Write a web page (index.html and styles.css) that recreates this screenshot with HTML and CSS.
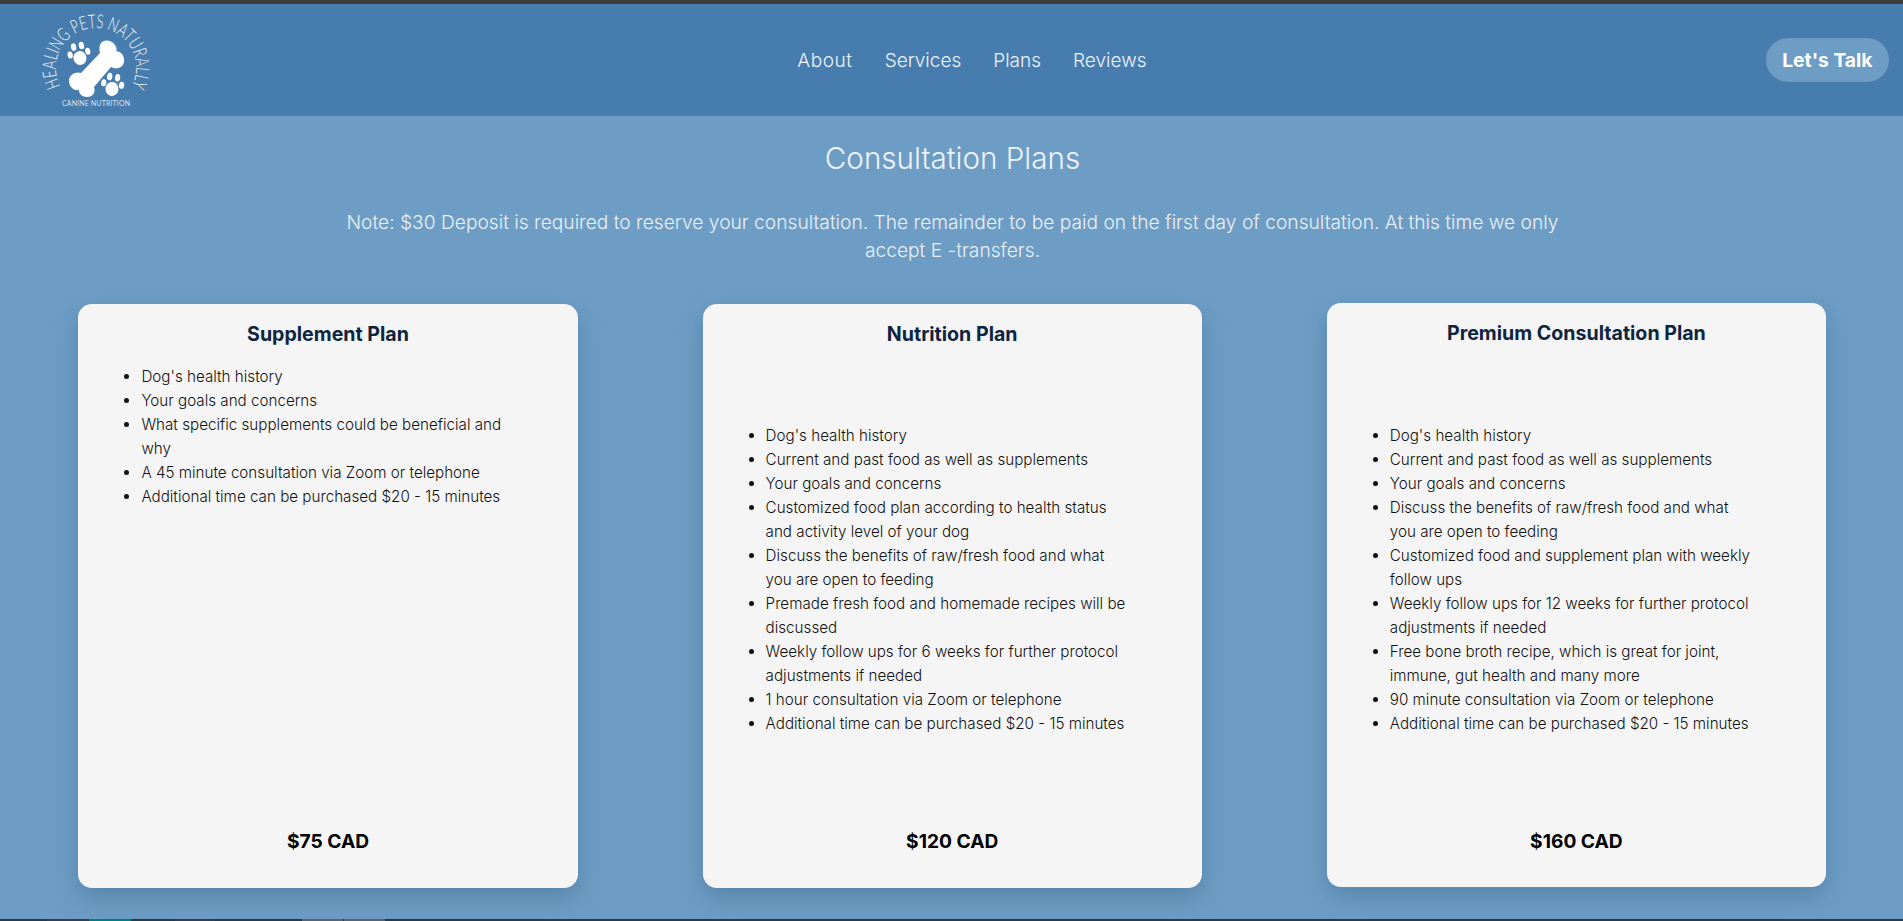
FILE: index.html
```html
<!DOCTYPE html>
<html lang="en">
<head>
<meta charset="utf-8">
<title>Healing Pets Naturally</title>
<link rel="stylesheet" href="styles.css">
</head>
<body>
<div class="top-edge"></div>
<header class="site-header">
  <a class="logo" href="#" aria-label="Healing Pets Naturally">
    <svg class="logo-svg" viewBox="30 4 148 112" width="148" height="112">
      <defs><path id="arc" d="M60.4 86.2 A40 40 0 1 1 131.6 86.2"/></defs>
      <text class="logo-arc"><textPath href="#arc" textLength="163" lengthAdjust="spacingAndGlyphs">HEALING PETS NATURALLY</textPath></text>
      <g class="logo-white">
        <path d="M101 43 C104 39 112 40 115 45 C117 48 117 50 116 51 C121 51 125 56 124 62 C123 68 116 70 111 67 L94 87 C96 92 93 97 87 97 C82 97 79 94 79 90 C74 91 69 87 69 81 C69 75 75 71 81 73 L100 53 C99 49 99 46 101 43 Z"/>
        <g transform="translate(80 58) rotate(-12)">
          <ellipse cx="0" cy="0" rx="6.5" ry="7"/>
          <ellipse cx="-9" cy="-5" rx="2.6" ry="3.5"/>
          <ellipse cx="-4" cy="-12" rx="2.6" ry="3.8"/>
          <ellipse cx="4" cy="-12" rx="2.6" ry="3.8"/>
          <ellipse cx="9" cy="-5" rx="2.6" ry="3.5"/>
        </g>
        <g transform="translate(112 89) rotate(8)">
          <ellipse cx="0" cy="0" rx="6.5" ry="7"/>
          <ellipse cx="-9" cy="-5" rx="2.6" ry="3.5"/>
          <ellipse cx="-4" cy="-12" rx="2.6" ry="3.8"/>
          <ellipse cx="4" cy="-12" rx="2.6" ry="3.8"/>
          <ellipse cx="9" cy="-5" rx="2.6" ry="3.5"/>
        </g>
      </g>
      <text class="logo-sub" x="96" y="106" text-anchor="middle" textLength="68">CANINE NUTRITION</text>
    </svg>
  </a>
  <nav class="main-nav">
    <a class="nav-about" href="#">About</a>
    <a href="#">Services</a>
    <a href="#">Plans</a>
    <a href="#">Reviews</a>
  </nav>
  <a class="cta" href="#">Let's Talk</a>
</header>
<main class="plans">
  <h1 class="plans-title">Consultation Plans</h1>
  <p class="plans-note">Note: $30 Deposit is required to reserve your consultation. The remainder to be paid on the first day of consultation. At this time we only accept E -transfers.</p>
  <section class="plan-grid">
    <article class="plan plan-top">
      <h2>Supplement Plan</h2>
      <div class="plan-body">
        <ul>
          <li>Dog's health history</li>
          <li>Your goals and concerns</li>
          <li>What specific supplements could be beneficial and why</li>
          <li>A 45 minute consultation via Zoom or telephone</li>
          <li>Additional time can be purchased $20 - 15 minutes</li>
        </ul>
      </div>
      <p class="price">$75 CAD</p>
    </article>
    <article class="plan">
      <h2>Nutrition Plan</h2>
      <div class="plan-body">
        <ul>
          <li>Dog's health history</li>
          <li>Current and past food as well as supplements</li>
          <li>Your goals and concerns</li>
          <li>Customized food plan according to health status and activity level of your dog</li>
          <li>Discuss the benefits of raw/fresh food and what you are open to feeding</li>
          <li>Premade fresh food and homemade recipes will be discussed</li>
          <li>Weekly follow ups for 6 weeks for further protocol adjustments if needed</li>
          <li>1 hour consultation via Zoom or telephone</li>
          <li>Additional time can be purchased $20 - 15 minutes</li>
        </ul>
      </div>
      <p class="price">$120 CAD</p>
    </article>
    <article class="plan plan-raised">
      <h2>Premium Consultation Plan</h2>
      <div class="plan-body">
        <ul>
          <li>Dog's health history</li>
          <li>Current and past food as well as supplements</li>
          <li>Your goals and concerns</li>
          <li>Discuss the benefits of raw/fresh food and what you are open to feeding</li>
          <li>Customized food and supplement plan with weekly follow ups</li>
          <li>Weekly follow ups for 12 weeks for further protocol adjustments if needed</li>
          <li>Free bone broth recipe, which is great for joint, immune, gut health and many more</li>
          <li>90 minute consultation via Zoom or telephone</li>
          <li>Additional time can be purchased $20 - 15 minutes</li>
        </ul>
      </div>
      <p class="price">$160 CAD</p>
    </article>
  </section>
</main>
<div class="bottom-edge">
  <span class="seg seg-a"></span><span class="seg seg-teal"></span><span class="seg seg-a2"></span><span class="seg seg-c"></span><span class="seg seg-c2"></span>
</div>
</body>
</html>
```
FILE: styles.css
```css
* { box-sizing: border-box; }
html, body { height: 100%; }
body {
  margin: 0;
  height: 921px;
  overflow: hidden;
  display: flex;
  flex-direction: column;
  background: #6d9dc5;
  font-family: Inter, "Liberation Sans", sans-serif;
  color: #111;
}
.top-edge { height: 4px; flex: none; background: #3c3c3c; }
.site-header {
  flex: none;
  height: 112px;
  padding: 0 14px 0 30px;
  display: flex;
  align-items: center;
  justify-content: space-between;
  background: #477cae;
}
.logo { display: block; height: 112px; }
.logo-svg { display: block; }
.logo-arc { font-family: Lato, sans-serif; font-weight: 300; font-size: 19px; fill: #f2f6fa; }
.logo-white { fill: #fff; }
.logo-sub { font-family: Lato, sans-serif; font-size: 7px; fill: #d6e4f1; }
.main-nav { display: flex; gap: 32px; }
.main-nav a { color: #eef3f8; text-decoration: none; font-size: 19px; font-weight: 300; }
.main-nav .nav-about { letter-spacing: 0.6px; }
.cta {
  display: block;
  padding: 0 16.5px;
  height: 44px;
  line-height: 44px;
  border-radius: 22px;
  background: #6d9dc5;
  color: #fff;
  font-size: 19.3px;
  font-weight: 700;
  text-decoration: none;
}
.plans { flex: 1; min-height: 0; display: flex; flex-direction: column; align-items: center; padding-left: 2px; }
.plans-title { margin: 22px 0 0; font-size: 29.6px; line-height: 40px; font-weight: 300; color: #eef3f8; }
.plans-note {
  margin: 30px 0 0;
  width: 1240px;
  text-align: center;
  font-size: 19.2px;
  line-height: 28px;
  font-weight: 300;
  color: #eaf0f6;
}
.plan-grid {
  align-self: stretch;
  margin: 40px 0 0 -2px;
  padding: 0 77px 0 78.4px;
  display: grid;
  grid-template-columns: repeat(3, 1fr);
  column-gap: 125px;
}
.plan {
  height: 584px;
  display: flex;
  flex-direction: column;
  padding: 17px 24px 0 24px;
  background: #f5f5f5;
  border-radius: 14px;
  box-shadow: 0 10px 24px rgba(40, 70, 100, 0.28);
}
.plan-raised { margin-top: -1px; }
.plan-raised .plan-body { padding-bottom: 14px; }
.plan-raised .price { margin-bottom: 33px; }
.plan h2 { margin: 0; text-align: center; font-size: 19.6px; line-height: 26px; font-weight: 700; color: #0e2540; }
.plan-body { flex: 1; min-height: 0; display: flex; flex-direction: column; justify-content: center; padding-bottom: 15px; }
.plan-top .plan-body { justify-content: flex-start; padding-top: 18px; }
.plan ul { margin: 0; padding-left: 39px; padding-right: 48px; font-size: 15.2px; font-weight: 350; line-height: 24px; }
.price { margin: 0 0 34px; text-align: center; font-size: 19.2px; line-height: 26px; font-weight: 700; color: #000; }
.bottom-edge { flex: none; height: 2px; display: flex; background: #2b3a44; }
.seg { display: block; height: 2px; }
.seg-a { width: 41px; margin-left: 47px; background: #333f4a; }
.seg-teal { width: 42px; margin-left: 1px; background: #00807a; }
.seg-a2 { width: 40px; margin-left: 44px; background: #333f4a; }
.seg-c { width: 41px; margin-left: 87px; background: #5c636b; }
.seg-c2 { width: 41px; margin-left: 1px; background: #5c636b; }
```
